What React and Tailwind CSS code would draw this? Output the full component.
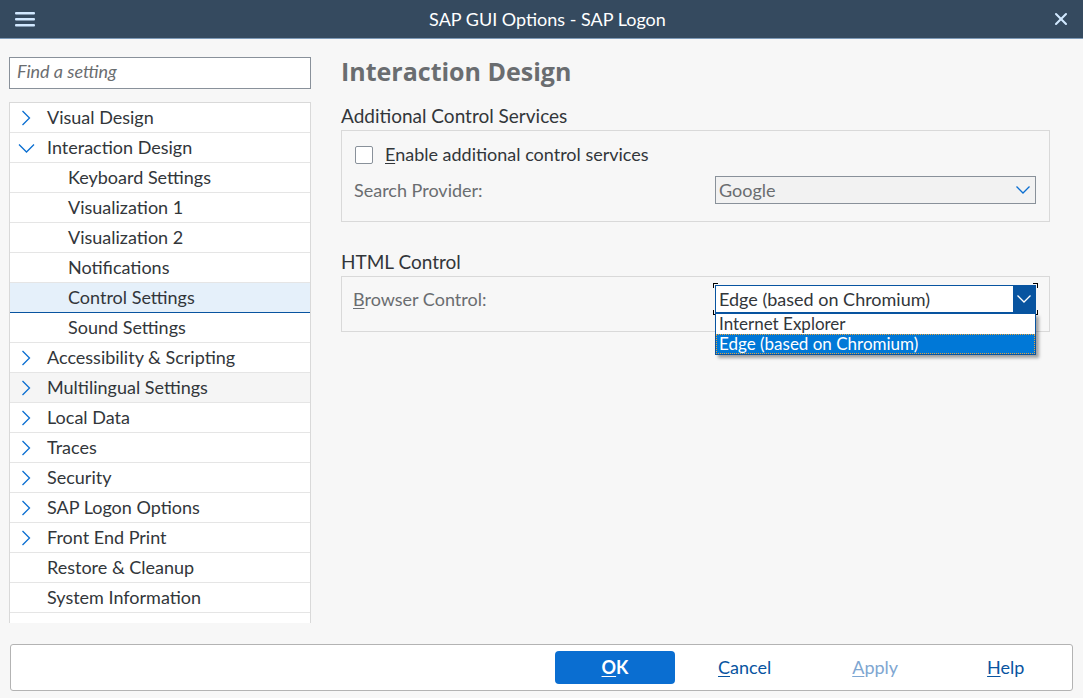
import { X } from 'lucide-react';

const tree = [
  { label: 'Visual Design', level: 0, icon: 'right' },
  { label: 'Interaction Design', level: 0, icon: 'down' },
  { label: 'Keyboard Settings', level: 1 },
  { label: 'Visualization 1', level: 1 },
  { label: 'Visualization 2', level: 1 },
  { label: 'Notifications', level: 1 },
  { label: 'Control Settings', level: 1, selected: true },
  { label: 'Sound Settings', level: 1 },
  { label: 'Accessibility & Scripting', level: 0, icon: 'right' },
  { label: 'Multilingual Settings', level: 0, icon: 'right', hover: true },
  { label: 'Local Data', level: 0, icon: 'right' },
  { label: 'Traces', level: 0, icon: 'right' },
  { label: 'Security', level: 0, icon: 'right' },
  { label: 'SAP Logon Options', level: 0, icon: 'right' },
  { label: 'Front End Print', level: 0, icon: 'right' },
  { label: 'Restore & Cleanup', level: 0 },
  { label: 'System Information', level: 0 },
];

const Chev = ({ className = '' }) => (
  <svg width="16" height="10" viewBox="0 0 16 10" className={className}>
    <path d="M1.5 1.5 L8 8 L14.5 1.5" fill="none" stroke="currentColor" strokeWidth="1.3" />
  </svg>
);

const TreeRight = () => (
  <svg width="10" height="16" viewBox="0 0 10 16">
    <path d="M1.5 1 L8.5 8 L1.5 15" fill="none" stroke="currentColor" strokeWidth="1.3" />
  </svg>
);

const TreeDown = () => (
  <svg width="17" height="10" viewBox="0 0 17 10">
    <path d="M1 1.5 L8.5 9 L16 1.5" fill="none" stroke="currentColor" strokeWidth="1.3" />
  </svg>
);

const TreeRow = ({ item }) => {
  let bg = 'bg-white';
  if (item.selected) bg = 'bg-[#e5f0fa]';
  else if (item.hover) bg = 'bg-[#f5f5f5]';
  return (
    <div
      className={`h-[30px] flex items-center border-b ${
        item.selected ? 'border-[#0854a0]' : 'border-[#e5e5e5]'
      } ${bg}`}
    >
      <div className="w-[37px] flex justify-center pr-[9px] pl-[4px] text-[#0a6ed1]">
        {item.icon === 'right' && <TreeRight />}
        {item.icon === 'down' && <TreeDown />}
      </div>
      <span className={`text-[18px] text-[#32363a] ${item.level === 1 ? 'pl-[21px]' : ''}`}>
        {item.label}
      </span>
    </div>
  );
};

const Corner = ({ pos }) => (
  <span className={`absolute w-[5px] h-[5px] border-black ${pos}`} />
);

export default function App() {
  return (
    <div
      className="w-[1083px] h-[698px] bg-[#f7f7f7] flex flex-col overflow-hidden"
      style={{ fontFamily: 'Lato, "Noto Sans", sans-serif' }}
    >
      {/* Title bar */}
      <div className="h-[39px] shrink-0 bg-[#354a5f] border-b border-[#7d9ab8] flex items-center px-[14px] text-white">
        <svg width="22" height="18" viewBox="0 0 22 18" className="text-[#d1e8ff]">
          <rect x="1" y="2" width="20" height="2.5" rx="1" fill="currentColor" />
          <rect x="1" y="8" width="20" height="2.5" rx="1" fill="currentColor" />
          <rect x="1" y="14" width="20" height="2.5" rx="1" fill="currentColor" />
        </svg>
        <div className="flex-1 text-center text-[18px] text-white pl-[8px]">SAP GUI Options - SAP Logon</div>
        <X size={20} strokeWidth={2.5} className="text-[#d1e8ff] mr-[-2px]" />
      </div>

      <div className="flex flex-1 min-h-0">
        {/* Left column */}
        <div className="w-[302px] ml-[9px] shrink-0 flex flex-col pt-[18px]">
          <div className="h-[32px] bg-white border border-[#89919a] flex items-center px-[7px] pb-[4px]">
            <span className="italic text-[18px] text-[#6a6d70]">Find a setting</span>
          </div>
          <div className="mt-[13px] flex-1 bg-white border-x border-t border-[#d9d9d9] overflow-hidden">
            {tree.map((item) => (
              <TreeRow key={item.label} item={item} />
            ))}
          </div>
        </div>

        {/* Right panel */}
        <div className="flex-1 pl-[30px] pr-[33px] pt-[16px] text-[#32363a]">
          <h1
            className="text-[25px] font-bold text-[#6a6d70] leading-[32px]"
            style={{ fontFamily: '"Open Sans", Lato, sans-serif' }}
          >
            Interaction Design
          </h1>

          <h2 className="text-[19px] leading-[26px] mt-[16px]">Additional Control Services</h2>
          <div className="mt-[1px] border border-[#d9d9d9] h-[92px] pl-[12px] pr-[13px] pt-[10px]">
            <div className="flex items-center gap-[12px] pl-[1px]">
              <span className="w-[18px] h-[18px] bg-white border border-[#89919a] rounded-[2px]" />
              <span className="text-[18px]">
                <span className="underline underline-offset-2">E</span>nable additional control services
              </span>
            </div>
            <div className="flex items-center mt-[8px]">
              <span className="w-[361px] text-[18px] text-[#6a6d70]">Search Provider:</span>
              <div className="w-[321px] h-[28px] bg-[#f2f2f2] border border-[#89919a] flex items-center justify-between pl-[3px] pr-[4px]">
                <span className="text-[18px] text-[#6a6d70]">Google</span>
                <Chev className="text-[#0a6ed1]" />
              </div>
            </div>
          </div>

          <h2 className="text-[19px] leading-[26px] mt-[27px]">HTML Control</h2>
          <div className="mt-[1px] border border-[#d9d9d9] h-[56px] px-[11px] pt-[8px]">
            <div className="flex">
              <span className="w-[362px] text-[18px] text-[#6a6d70] pt-[1px]">
                <span className="underline underline-offset-2">B</span>rowser Control:
              </span>
              <div className="relative w-[321px]">
                <div className="h-[28px] bg-white border border-[#0854a0] flex items-center justify-between">
                  <span className="text-[18px] text-[#32363a] pl-[3px]">Edge (based on Chromium)</span>
                  <div className="w-[22px] h-full bg-[#0854a0] flex items-center justify-center text-white">
                    <Chev />
                  </div>
                </div>
                <Corner pos="-top-[2px] -left-[2px] border-t border-l" />
                <Corner pos="-top-[2px] -right-[2px] border-t border-r" />
                <Corner pos="-bottom-[2px] -left-[2px] border-b border-l" />
                <Corner pos="-bottom-[2px] -right-[2px] border-b border-r" />
                {/* Open list */}
                <div className="absolute left-0 top-[28px] w-[321px] bg-white border border-[#0854a0] shadow-[3px_3px_3px_rgba(0,0,0,0.35)] z-10">
                  <div className="h-[20px] flex items-center pl-[3px] text-[17px] text-[#32363a]">Internet Explorer</div>
                  <div className="h-[20px] flex items-center pl-[3px] text-[17px] text-white bg-[#0078d7] outline outline-1 outline-dotted outline-[#e8a33a] -outline-offset-1">
                    Edge (based on Chromium)
                  </div>
                </div>
              </div>
            </div>
          </div>
        </div>
      </div>

      {/* Footer */}
      <div className="h-[75px] shrink-0 flex items-start pt-[21px] px-[10px]">
        <div className="flex-1 h-[47px] bg-white border border-[#b3b3b3] rounded-[3px] flex items-center pl-[544px]">
          <button className="w-[120px] h-[33px] bg-[#0a6ed1] rounded-[4px] text-white text-[18px] font-bold">
            <span className="underline underline-offset-2">O</span>K
          </button>
          <span className="ml-[43px] text-[18px] text-[#0854a0]">
            <span className="underline underline-offset-2">C</span>ancel
          </span>
          <span className="ml-[81px] text-[18px] text-[#7ea6d1]">
            <span className="underline underline-offset-2">A</span>pply
          </span>
          <span className="ml-[89px] text-[18px] text-[#0854a0]">
            <span className="underline underline-offset-2">H</span>elp
          </span>
        </div>
      </div>
    </div>
  );
}
